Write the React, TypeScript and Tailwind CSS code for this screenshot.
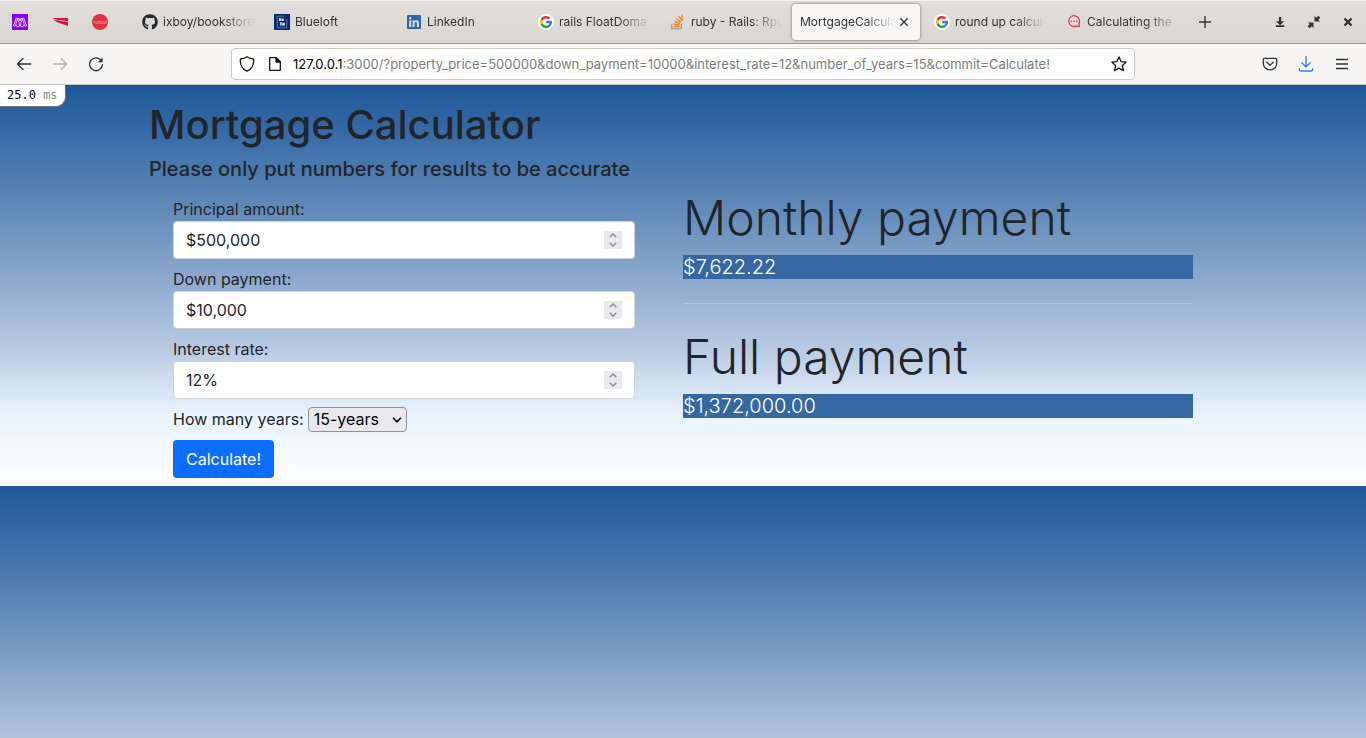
import React, { useState } from "react";
import { FaGithub, FaLinkedin } from "react-icons/fa";

const GoogleIcon = () => (
  <svg viewBox="0 0 16 16" className="size-4" aria-hidden="true">
    <circle cx="8" cy="8" r="8" fill="#fff" />
    <path d="M2.600 5.300A6 6 0 0 1 12.300 3.800L10.600 5.500A3.600 3.600 0 0 0 4.700 6.800z" fill="#ea3335" />
    <path d="M2.600 5.200A6.100 6.100 0 0 0 2.600 10.800L4.700 9.200A3.700 3.700 0 0 1 4.700 6.800z" fill="#fbbc05" />
    <path d="M2.600 10.700A6 6 0 0 0 12.100 12.500L10.200 11A3.600 3.600 0 0 1 4.700 9.100z" fill="#12ac47" />
    <path d="M8.100 6.800h5.800a6 6 0 0 1-1.800 5.700L10.200 11c.6-.4 1-1 1.200-1.800H8.100z" fill="#4f6df5" />
  </svg>
);

const MauveIcon = () => (
  <svg viewBox="0 0 16 16" className="size-4" aria-hidden="true">
    <rect width="16" height="16" fill="#8a00f8" />
    <g fill="none" stroke="#fff" strokeWidth="0.8" strokeLinejoin="round" strokeLinecap="round">
      <path d="M1.500 11.600L4 4.800Q4.800 3 5.600 4.800L7.300 9.600Q8.400 13 5.600 12.700Q3 12.500 3.900 9.600L5.800 4.800" />
      <path d="M14.500 11.600L12 4.800Q11.200 3 10.400 4.800L8.700 9.600Q7.600 13 10.400 12.700Q13 12.500 12.100 9.600L10.200 4.800" />
      <path d="M5.800 4.800Q6.600 3 7.300 4.800L8 7L8.700 4.800Q9.400 3 10.200 4.800M1.500 11.600Q2.400 13.400 3.900 11.600M14.500 11.600Q13.600 13.400 12.100 11.600" />
    </g>
  </svg>
);

const WingIcon = () => (
  <svg viewBox="0 0 16 16" className="size-4" aria-hidden="true">
    <path d="M0 4.100L16 4.100V7.200L5 5.700z" fill="#d3123a" />
    <path d="M1 5.600L16 8.200V12L5 7.900z" fill="#d3123a" />
  </svg>
);

const TungaIcon = () => (
  <svg viewBox="0 0 16 16" className="size-4" aria-hidden="true">
    <circle cx="8" cy="8" r="8" fill="#de3341" />
    <text x="8" y="9.500" textAnchor="middle" fontSize="4" fill="#f6b9bd" fontFamily="Inter, sans-serif">
      TUNGA
    </text>
  </svg>
);

const BlueloftIcon = () => (
  <svg viewBox="0 0 16 16" className="size-4" aria-hidden="true">
    <rect width="16" height="16" fill="#052c72" />
    <path d="M10.500 2.200H3.200V13.800H12.800V5" fill="none" stroke="#7f95bb" strokeWidth="0.7" />
    <g fill="#dfe6f2">
      <rect x="5" y="4" width="1.800" height="3" />
      <rect x="7.400" y="4.600" width="2.400" height="2.400" />
      <rect x="6.200" y="8" width="1.400" height="3.600" />
      <rect x="8.200" y="8.800" width="2.600" height="2.800" />
    </g>
  </svg>
);

const StackIcon = () => (
  <svg viewBox="0 0 16 16" className="size-4" fill="none" aria-hidden="true">
    <path d="M1.700 9.800v4.900h9.600V9.800" stroke="#9a9fa5" strokeWidth="1.300" />
    <path d="M3.600 12.500h5.900M3.800 10l5.900 1.100M4.700 7.200l5.300 2.500M6.400 4.500l4.500 3.700M8.700 2.200l3.500 4.700M11.600.6l.9 5.400" stroke="#f48024" strokeWidth="1.300" />
  </svg>
);

const ChatIcon = () => (
  <svg viewBox="0 0 16 16" className="size-4" fill="none" aria-hidden="true">
    <path d="M12.800 9.800A5.400 5.400 0 1 0 10.400 12L13.500 12.500z" stroke="#ea2a45" strokeWidth="1.200" strokeLinejoin="round" />
    <g fill="#ea2a45">
      <circle cx="5.300" cy="7.200" r="0.8" />
      <circle cx="8" cy="7.200" r="0.8" />
      <circle cx="10.700" cy="7.200" r="0.8" />
    </g>
  </svg>
);

const pinned = [
  { name: "Mauve", icon: <MauveIcon /> },
  { name: "Wing", icon: <WingIcon /> },
  { name: "Tunga", icon: <TungaIcon /> },
];

const tabs: { title: string; icon?: React.ReactNode; active?: boolean }[] = [
  { title: "ixboy/bookstore", icon: <FaGithub className="size-4 text-[#24292f]" /> },
  { title: "Blueloft", icon: <BlueloftIcon /> },
  { title: "LinkedIn", icon: <FaLinkedin className="size-4 text-[#2867b2]" /> },
  { title: "rails FloatDoma", icon: <GoogleIcon /> },
  { title: "ruby - Rails: Rpu", icon: <StackIcon /> },
  { title: "MortgageCalcula", active: true },
  { title: "round up calcul", icon: <GoogleIcon /> },
  { title: "Calculating the", icon: <ChatIcon /> },
];

function Tab({ title, icon, active }: { title: string; icon?: React.ReactNode; active?: boolean }) {
  return (
    <div className="min-w-0 flex-1">
      <div
        role="tab"
        aria-selected={!!active}
        className={
          active
            ? "mx-[2px] flex h-9 items-center rounded-sm bg-[#f7f6f5] pr-2 pl-2 shadow-[0_0_3px_rgba(0,0,0,0.55)]"
            : "flex h-9 items-center gap-[5px] pr-2 pl-3"
        }
      >
        {icon && <span className="shrink-0">{icon}</span>}
        <span className="min-w-0 flex-1 overflow-hidden whitespace-nowrap [mask-image:linear-gradient(to_right,#000_calc(100%_-_32px),transparent)]">
          {title}
        </span>
        {active && (
          <button type="button" aria-label="Close tab" className="shrink-0">
            <svg viewBox="0 0 16 16" className="size-4" stroke="#2e3436" strokeWidth="1.300" aria-hidden="true">
              <path d="M4.300 4.300l7.400 7.400M11.700 4.300l-7.400 7.400" />
            </svg>
          </button>
        )}
      </div>
    </div>
  );
}

function BrowserChrome() {
  return (
    <header className="text-[13px] leading-5 text-[#2e3436]">
      <div className="flex h-11 items-center border-t border-b border-t-[#f5f4f3] border-b-[#979690] bg-linear-to-b from-[#e1dedb] to-[#dad6d2]">
        <div className="flex min-w-0 flex-1 items-center" role="tablist">
          {pinned.map((p) => (
            <div key={p.name} role="tab" aria-label={p.name} className="flex w-10 shrink-0 justify-center">
              {p.icon}
            </div>
          ))}
          <div className="ml-[10px] flex min-w-0 flex-1 text-xs leading-5">
            {tabs.map((t) => (
              <Tab key={t.title} {...t} />
            ))}
          </div>
        </div>
        <div className="flex w-[180px] shrink-0 items-center justify-between pr-[10px] pl-[11px]">
          <button type="button" aria-label="New tab">
            <svg viewBox="0 0 16 16" className="size-4" stroke="#2e3436" strokeWidth="1.400" aria-hidden="true">
              <path d="M8 2v12M2 8h12" />
            </svg>
          </button>
          <div className="flex gap-[18px]">
            <button type="button" aria-label="Minimize">
              <svg viewBox="0 0 16 16" className="size-4" fill="#2e3436" aria-hidden="true">
                <path d="M7 3h2.200v4.200h3L8.100 11.200 4 7.200h3zM4 11.200h8.200v1.800H4z" />
              </svg>
            </button>
            <button type="button" aria-label="Restore">
              <svg viewBox="0 0 16 16" className="size-4" fill="#2e3436" aria-hidden="true">
                <path d="M8.500 1.900v5.600h5.600L12.300 5.700l2-2-1.900-1.900-2 2zM7.500 14.100V8.500H1.900L3.700 10.300l-2 2 1.900 1.900 2-2z" />
              </svg>
            </button>
            <button type="button" aria-label="Close window">
              <svg viewBox="0 0 16 16" className="size-4" stroke="#2e3436" strokeWidth="2.400" aria-hidden="true">
                <path d="M4.500 4.500l7 7M11.500 4.500l-7 7" />
              </svg>
            </button>
          </div>
        </div>
      </div>

      <div className="flex h-[41px] items-center border-b border-[#ccc8c2] bg-[#f6f5f4]">
        <div className="flex w-[231px] shrink-0 items-center gap-5 pl-4">
          <button type="button" aria-label="Back">
            <svg viewBox="0 0 16 16" className="size-4" fill="none" stroke="#2e3436" strokeWidth="1.400" strokeLinecap="round" strokeLinejoin="round" aria-hidden="true">
              <path d="M14.600 8H1.600M7 2.400L1.400 8 7 13.600" />
            </svg>
          </button>
          <button type="button" aria-label="Forward" disabled>
            <svg viewBox="0 0 16 16" className="size-4" fill="none" stroke="#b0b0ae" strokeWidth="1.400" strokeLinecap="round" strokeLinejoin="round" aria-hidden="true">
              <path d="M1.400 8h13M9 2.400L14.600 8 9 13.600" />
            </svg>
          </button>
          <button type="button" aria-label="Reload">
            <svg viewBox="0 0 16 16" className="size-4" fill="none" stroke="#2e3436" strokeWidth="1.400" strokeLinecap="round" aria-hidden="true">
              <path d="M12.800 4A6.400 6.400 0 1 0 14.400 8.600" />
              <path d="M14.600 1.400v4.800H9.800z" fill="#2e3436" stroke="none" />
            </svg>
          </button>
        </div>
        <div className="flex h-8 min-w-0 flex-1 items-center rounded-sm border border-[#cbc6bf] bg-white px-[7px]">
          <svg viewBox="0 0 16 16" className="size-4 shrink-0" fill="none" stroke="#15141a" strokeWidth="1.300" strokeLinejoin="round" aria-hidden="true">
            <path d="M8 .8C6.400 2 4 2.800 1.400 3 .9 8.500 3.200 13 8 15.200 12.800 13 15.100 8.500 14.600 3 12 2.800 9.600 2 8 .8z" />
          </svg>
          <svg viewBox="0 0 16 16" className="ml-3 size-4 shrink-0" fill="none" stroke="#15141a" strokeWidth="1.300" strokeLinejoin="round" aria-hidden="true">
            <path d="M2.700 1.700h6.500l4.100 4.100v8.500H2.700z" />
            <path d="M9 1.700v4.300h4.300z" fill="#15141a" />
          </svg>
          <span className="ml-[10px] min-w-0 flex-1 overflow-hidden whitespace-nowrap text-[#7c7c7c]">
            <span className="text-black">127.0.0.1</span>
            :3000/?property_price=500000&amp;down_payment=10000&amp;interest_rate=12&amp;number_of_years=15&amp;commit=Calculate!
          </span>
          <button type="button" aria-label="Bookmark this page" className="shrink-0">
            <svg viewBox="0 0 16 16" className="size-4" fill="none" stroke="#15141a" strokeWidth="1.300" strokeLinejoin="round" aria-hidden="true">
              <path d="M8 .9l2.100 4.700 5.100.5-3.800 3.500 1.100 5.100L8 12.100l-4.500 2.600 1.100-5.100L.8 6.100l5.100-.5z" />
            </svg>
          </button>
        </div>
        <div className="flex w-[231px] shrink-0 items-center justify-end gap-5 pr-4">
          <button type="button" aria-label="Save to Pocket">
            <svg viewBox="0 0 16 16" className="size-4" fill="none" stroke="#2e3436" strokeWidth="1.300" strokeLinecap="round" strokeLinejoin="round" aria-hidden="true">
              <path d="M2.300 2.300h11.400a1 1 0 0 1 1 1v4.200a6.700 6.300 0 0 1-13.400 0V3.300a1 1 0 0 1 1-1z" />
              <path d="M4.800 6.300L8 9.400l3.200-3.100" />
            </svg>
          </button>
          <button type="button" aria-label="Downloads">
            <svg viewBox="0 0 16 16" className="size-4" fill="none" stroke="#3584e4" strokeWidth="1.400" strokeLinecap="round" strokeLinejoin="round" aria-hidden="true">
              <path d="M8 .8v10M3.800 6.800L8 11l4.200-4.200M1.400 12.800v.9c0 .8.500 1.300 1.300 1.300h10.600c.8 0 1.300-.5 1.300-1.300v-.9" />
            </svg>
          </button>
          <button type="button" aria-label="Menu">
            <svg viewBox="0 0 16 16" className="size-4" stroke="#2e3436" strokeWidth="1.300" aria-hidden="true">
              <path d="M2 3.500h12M2 8h12M2 12.500h12" />
            </svg>
          </button>
        </div>
      </div>
    </header>
  );
}

function AmountField({ id, label, initial }: { id: string; label: string; initial: string }) {
  const [value, setValue] = useState(initial);
  const step = (delta: number) => {
    const n = Math.max(0, Number(value.replace(/[^0-9.]/g, "")) + delta);
    setValue(initial.startsWith("$") ? "$" + n.toLocaleString("en-US") : n + "%");
  };
  return (
    <div>
      <label htmlFor={id} className="block">
        {label}
      </label>
      <div className="flex h-[38px] items-center rounded-sm border border-[#ced4da] bg-white px-3">
        <input
          id={id}
          type="text"
          inputMode="numeric"
          value={value}
          onChange={(e) => setValue(e.target.value)}
          className="min-w-0 flex-1 bg-transparent outline-none"
        />
        <div className="flex w-[18px] flex-col bg-[#e9e9ed]">
          <button type="button" aria-label={"Increase " + label} className="flex h-[9px] items-center justify-center" onClick={() => step(1)}>
            <svg viewBox="0 0 8 5" className="h-[5px] w-2" fill="none" stroke="#8f8f9d" strokeWidth="1.500" aria-hidden="true">
              <path d="M.7 4.200L4 1l3.300 3.200" />
            </svg>
          </button>
          <button type="button" aria-label={"Decrease " + label} className="flex h-[9px] items-center justify-center" onClick={() => step(-1)}>
            <svg viewBox="0 0 8 5" className="h-[5px] w-2" fill="none" stroke="#8f8f9d" strokeWidth="1.500" aria-hidden="true">
              <path d="M.7.800L4 4 7.300.800" />
            </svg>
          </button>
        </div>
      </div>
    </div>
  );
}

function Result({ title, amount }: { title: string; amount: string }) {
  return (
    <section>
      <h2 className="text-5xl leading-[58px] font-light">{title}</h2>
      <p className="mt-2 bg-[#3567a3] text-xl leading-6 font-light text-white">{amount}</p>
    </section>
  );
}

export default function App() {
  return (
    <div className="flex min-h-screen flex-col font-[Inter,'Noto_Sans',sans-serif]">
      <BrowserChrome />
      <main className="relative flex-1 bg-[linear-gradient(to_bottom,#1e5799_0%,#5380b3_25%,#7f9fc6_43%,#b8cae2_66%,#e8f3fc_82%,#ffffff_100%)] bg-[length:100%_401px] text-base leading-6 text-[#212529]">
        <div className="absolute top-0 left-0 rounded-br-[10px] border-r border-b border-[#777777] bg-white px-[7px] pb-[1px] font-['DejaVu_Sans_Mono',monospace] text-xs leading-5 text-black">
          25.0 <span className="text-[#888888]">ms</span>
        </div>
        <div className="mx-auto max-w-[1116px] pt-4 pb-2">
          <div className="px-6">
            <h1 className="text-[40px] leading-[48px] font-medium">Mortgage Calculator</h1>
            <p className="mt-2 text-xl leading-6 font-medium">Please only put numbers for results to be accurate</p>
          </div>
          <div className="mt-2 grid grid-cols-2">
            <form className="flex flex-col gap-2 px-12 pt-2" onSubmit={(e) => e.preventDefault()}>
              <AmountField id="property_price" label="Principal amount:" initial="$500,000" />
              <AmountField id="down_payment" label="Down payment:" initial="$10,000" />
              <AmountField id="interest_rate" label="Interest rate:" initial="12%" />
              <div className="flex items-start gap-1">
                <label htmlFor="number_of_years">How many years:</label>
                <span className="grid items-center">
                  <select
                    id="number_of_years"
                    defaultValue="15"
                    className="col-start-1 row-start-1 h-[25px] appearance-none rounded-sm border border-[#8f8f9d] bg-[#e9e9ed] pr-[23px] pb-[2px] pl-[5px] leading-5 text-black"
                  >
                    <option value="15">15-years</option>
                    <option value="20">20-years</option>
                    <option value="30">30-years</option>
                  </select>
                  <svg viewBox="0 0 10 6" className="pointer-events-none col-start-1 row-start-1 mr-[5px] h-[6px] w-[10px] justify-self-end" fill="none" stroke="#000" strokeWidth="1.600" aria-hidden="true">
                    <path d="M1 .800L5 4.800 9 .800" />
                  </svg>
                </span>
              </div>
              <button type="submit" className="h-[38px] self-start rounded-sm bg-[#0d6efd] px-[13px] text-white">
                Calculate!
              </button>
            </form>
            <div className="pr-12">
              <Result title="Monthly payment" amount="$7,622.22" />
              <hr className="my-6 border-[#b4c6e0]" />
              <Result title="Full payment" amount="$1,372,000.00" />
            </div>
          </div>
        </div>
      </main>
    </div>
  );
}
